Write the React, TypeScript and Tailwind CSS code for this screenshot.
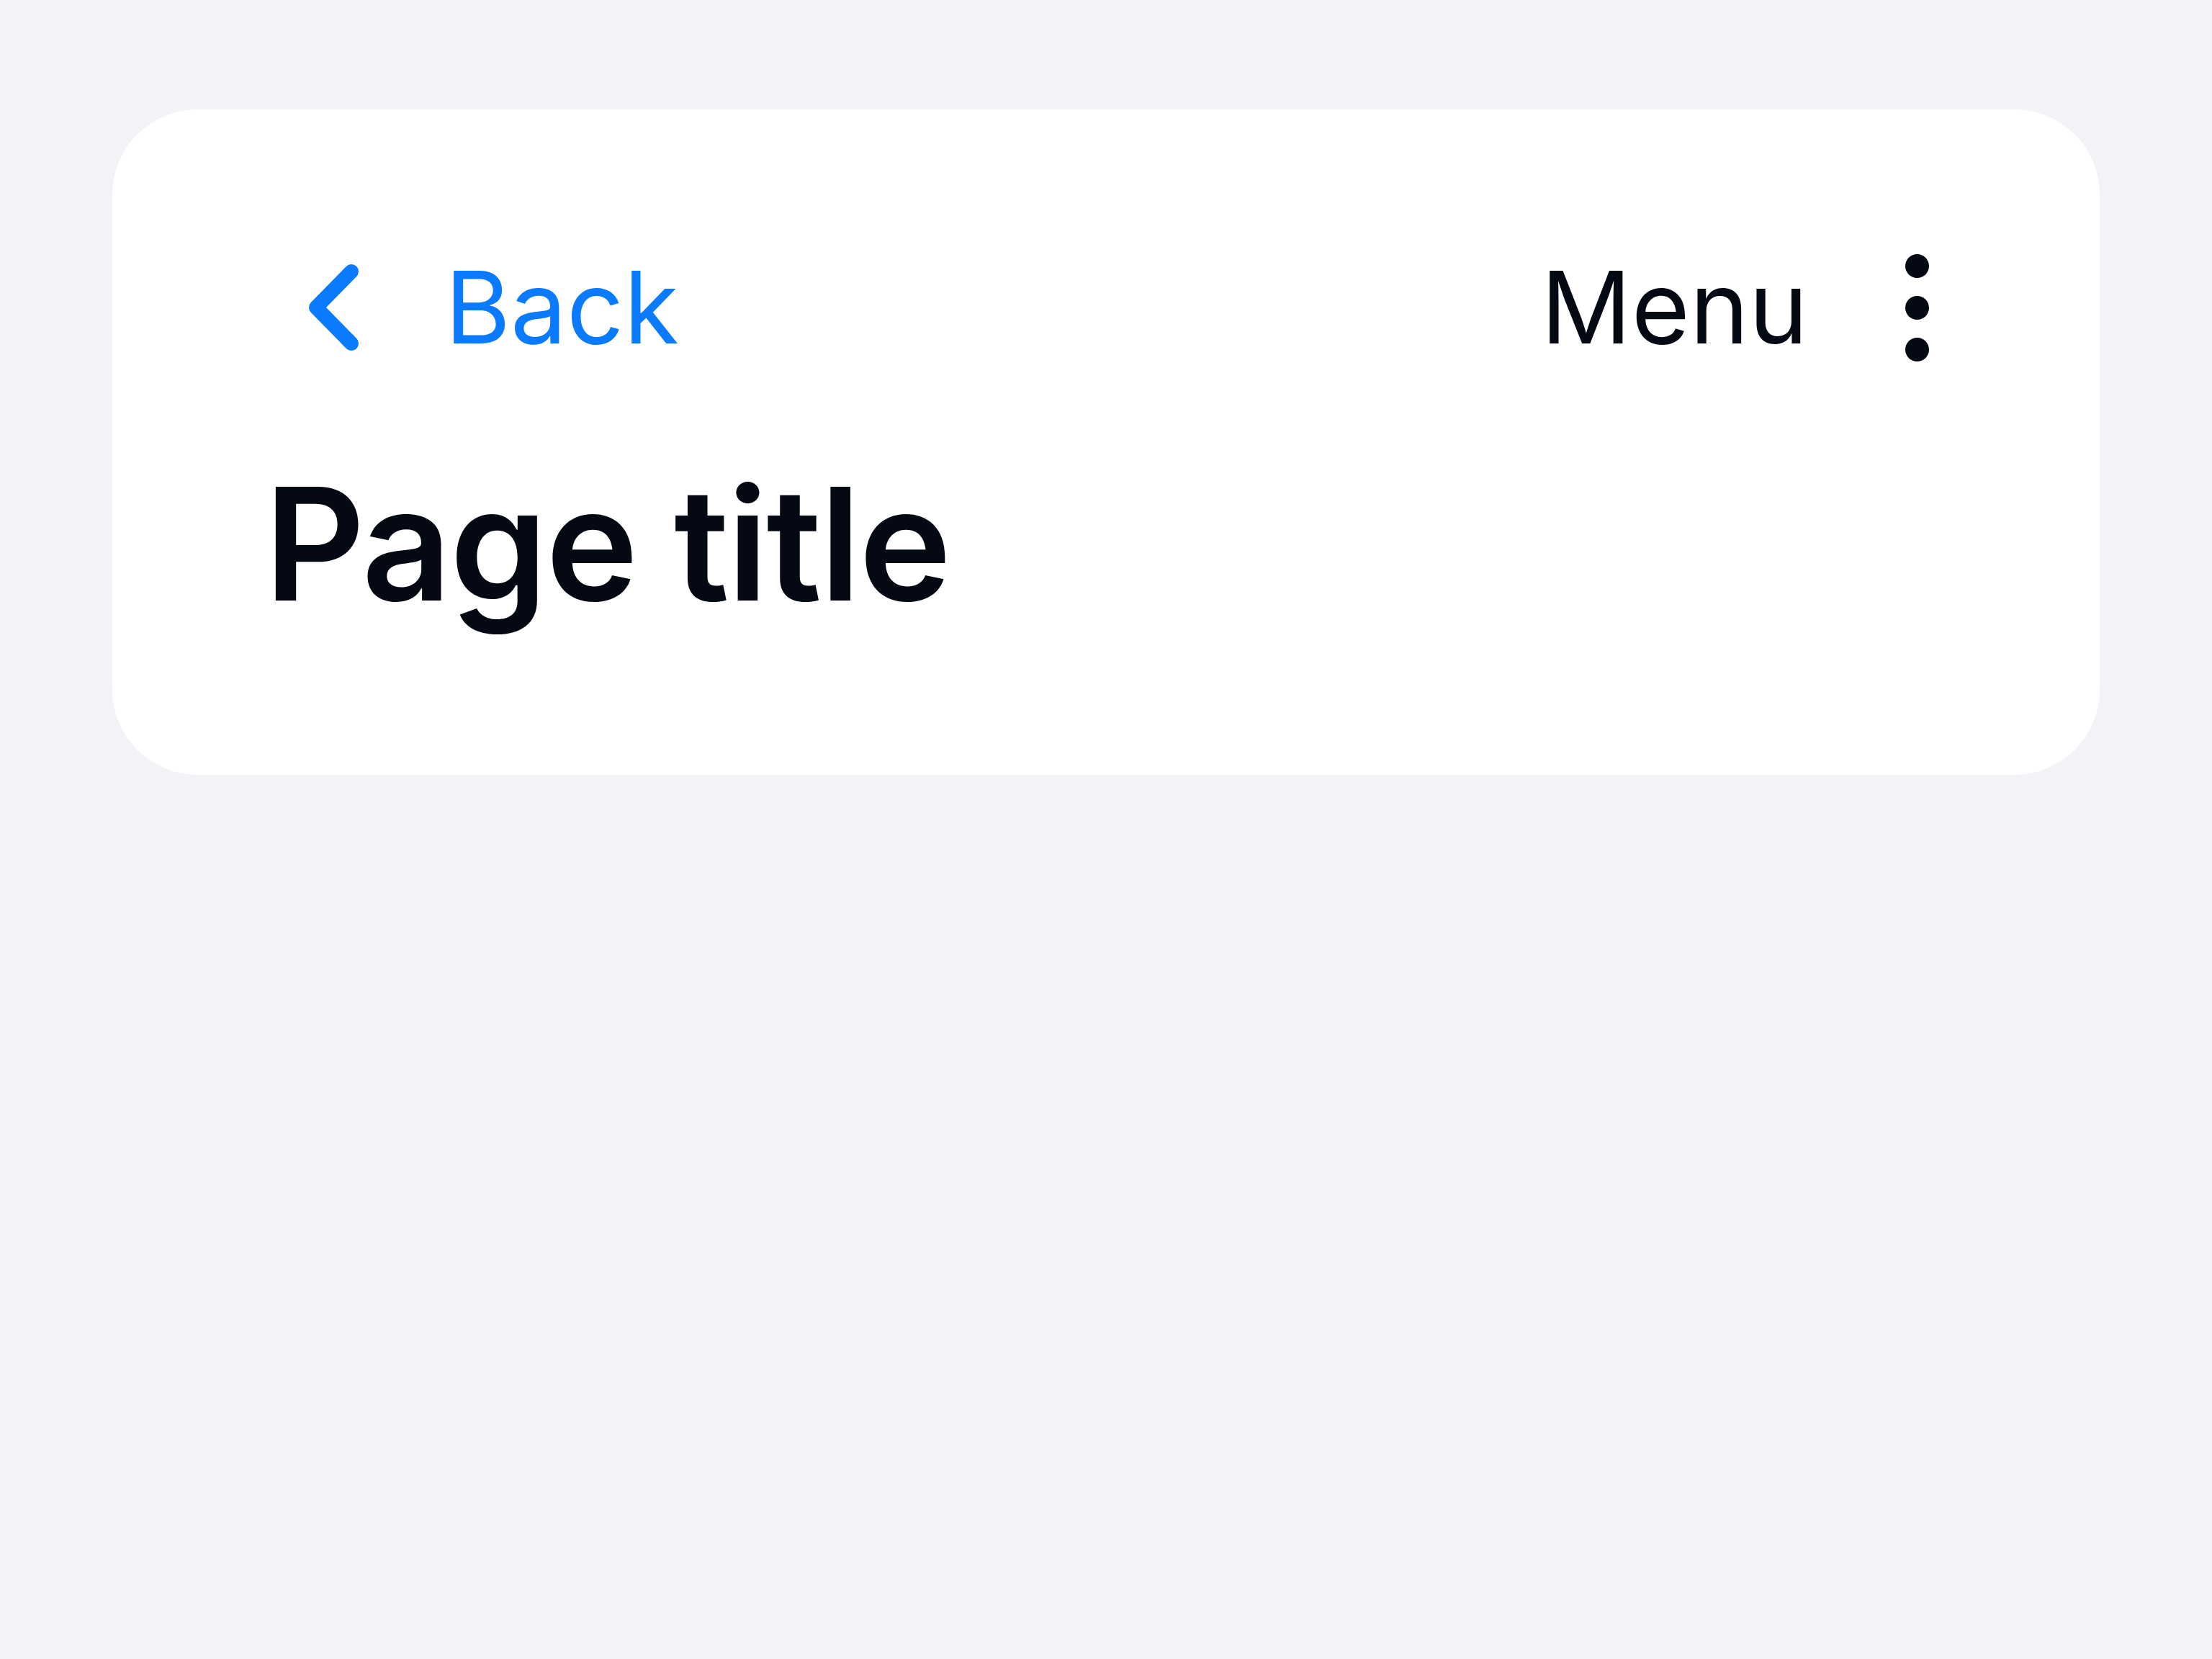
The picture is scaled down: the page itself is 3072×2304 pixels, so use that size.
export default function App() {
  return (
    <div
      className="min-h-screen w-full bg-[#f2f3f6] pt-[152px] px-[156px]"
      style={{ fontFamily: "Inter, 'Noto Sans', sans-serif" }}
    >
      <div className="bg-white rounded-[118px] h-[924px] pl-[225px] pr-[237px] pt-[212px]">
        <div className="flex items-center justify-between h-[124px]">
          <button className="flex items-center text-[#0a7aff]">
            <svg
              className="ml-[48px] mt-[2px]"
              width="69"
              height="120"
              viewBox="0 0 69 120"
              fill="none"
              stroke="currentColor"
              strokeWidth="20"
              strokeLinecap="round"
              strokeLinejoin="round"
            >
              <path d="M59 10 L10 60 L59 110" />
            </svg>
            <span className="ml-[120px] text-[139px] leading-none">Back</span>
          </button>
          <div className="flex items-center text-[#050913]">
            <span className="text-[139px] leading-none">Menu</span>
            <div className="ml-[135px] mt-[2px] flex flex-col gap-[25px]">
              <span className="block w-[33px] h-[33px] rounded-full bg-[#050913]" />
              <span className="block w-[33px] h-[33px] rounded-full bg-[#050913]" />
              <span className="block w-[33px] h-[33px] rounded-full bg-[#050913]" />
            </div>
          </div>
        </div>
        <h1 className="-ml-[14px] mt-[159px] text-[217px] font-semibold leading-none tracking-[-2.5px] text-[#050913]">
          Page title
        </h1>
      </div>
    </div>
  );
}
